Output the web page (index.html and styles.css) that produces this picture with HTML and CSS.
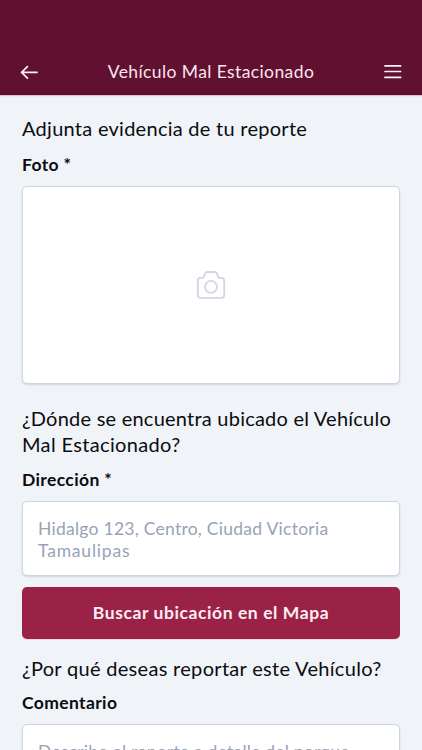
FILE: index.html
```html
<!DOCTYPE html>
<html lang="es">
<head>
<meta charset="utf-8">
<meta name="viewport" content="width=device-width, initial-scale=1">
<title>Vehículo Mal Estacionado</title>
<link rel="stylesheet" href="styles.css">
</head>
<body>
<header class="topbar">
  <svg class="icon" width="18" height="14" viewBox="0 0 18 14"><path d="M17 7.400H1.600M7.400 1.600L1.600 7.400l5.800 5.800"/></svg>
  <h1 class="title">Vehículo Mal Estacionado</h1>
  <svg class="icon" width="18" height="14" viewBox="0 0 18 14"><path d="M1 .9h15.600M1 6.500h15.600M1 12.400h15.600"/></svg>
</header>
<main class="form">
  <section class="group">
    <h2 class="heading evidence">Adjunta evidencia de tu reporte</h2>
    <div class="label photo-label">Foto *</div>
    <div class="field photo">
      <svg class="camera" width="30" height="30" viewBox="0 0 30 30"><path d="M4.400 7.800h2c1 0 1.300-.4 1.600-1.300l.7-2.300C9.200 2.600 9.700 2 11.200 2h7.600c1.500 0 2 .6 2.500 2.200l.7 2.300c.3.900.6 1.300 1.600 1.300h2c1.700 0 2.600.9 2.600 2.600v14.900c0 1.700-.9 2.600-2.600 2.600H4.400c-1.700 0-2.600-.9-2.600-2.600V10.400c0-1.700.9-2.600 2.600-2.600z"/><circle cx="15" cy="16.800" r="6"/></svg>
    </div>
  </section>
  <section class="group location">
    <h2 class="heading place"><span class="where">¿Dónde se encuentra ubicado el Vehículo</span><br><span class="parked">Mal Estacionado?</span></h2>
    <div class="label address-label">Dirección *</div>
    <div class="field address"><span class="street">Hidalgo 123, Centro, Ciudad Victoria</span><br><span class="state">Tamaulipas</span></div>
    <button class="button">Buscar ubicación en el Mapa</button>
  </section>
  <section class="group reason">
    <h2 class="heading why">¿Por qué deseas reportar este Vehículo?</h2>
    <div class="label comment-label">Comentario</div>
    <div class="field comment">Describe el reporte a detalle del porque</div>
  </section>
</main>
</body>
</html>
```
FILE: styles.css
```css
* { box-sizing: border-box; }
body {
  margin: 0;
  height: 750px;
  overflow: hidden;
  background: #f0f3f8;
  color: #0b0c0f;
  font-family: Lato, "Liberation Sans", sans-serif;
  white-space: nowrap;
}
.topbar {
  height: 95px;
  padding: 49px 20px 0;
  display: flex;
  align-items: center;
  justify-content: space-between;
  background: #60112f;
  box-shadow: 0 1px 1px #d9c3d0;
  color: #fbe4ef;
}
.icon { display: block; fill: none; stroke: #fff0f7; stroke-width: 1.7; stroke-linecap: round; stroke-linejoin: round; }
.title { margin: 0; font-size: 17.5px; line-height: 24px; font-weight: 400; letter-spacing: .4px; }
.form { height: 655px; overflow: hidden; padding: 21px 22px 0; }
.heading { margin: 0; font-size: 20px; line-height: 25px; font-weight: 400; }
.evidence { letter-spacing: .27px; }
.place { line-height: 25.5px; }
.where { letter-spacing: .23px; }
.parked { letter-spacing: .35px; }
.why { letter-spacing: .31px; }
.label { font-size: 17.5px; line-height: 22px; font-weight: 700; letter-spacing: .37px; }
.photo-label { margin-top: 13px; }
.address-label { margin-top: 12px; }
.comment-label { margin-top: 11px; }
.field { margin-top: 10px; border: 1px solid #cdd5e1; border-radius: 5px; background: #fff; box-shadow: 0 1px 2px #cfd6e0; }
.photo { height: 198px; display: flex; align-items: center; justify-content: center; }
.camera { fill: none; stroke: #d0d6e2; stroke-width: 1.8; }
.location { margin-top: 22px; }
.address { height: 75px; padding: 16px 15px; }
.address, .comment { color: #97a3b8; font-size: 17.5px; line-height: 22px; }
.street { letter-spacing: .26px; }
.state { letter-spacing: .8px; }
.button {
  display: block;
  width: 100%;
  height: 52px;
  margin-top: 11px;
  padding: 0;
  border: 0;
  border-radius: 5px;
  background: #9b2247;
  box-shadow: 0 1px 1px #f5d3e1;
  color: #ffedf5;
  font: 700 17.5px/24px Lato, "Liberation Sans", sans-serif;
  letter-spacing: .58px;
}
.reason { margin-top: 17px; }
.comment { height: 90px; padding: 16px 15px; letter-spacing: .22px; }
```
